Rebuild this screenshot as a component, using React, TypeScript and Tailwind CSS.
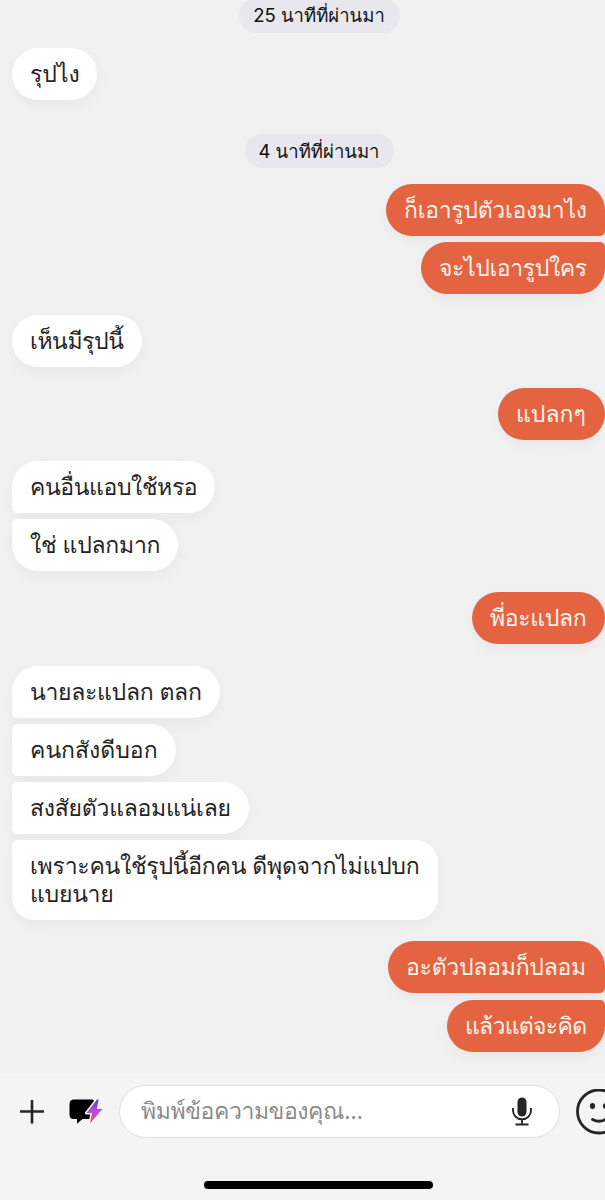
import { clsx } from 'clsx';

type Message = {
  lines: string[];
  // bubble width and text tracking
  size: string;
};

type Group = {
  mine?: boolean;
  className: string;
  messages: Message[];
};

const firstGroups: Group[] = [
  { className: 'mt-[15px]', messages: [{ lines: ['รุปไง'], size: 'w-[85px]' }] },
];

const groups: Group[] = [
  {
    mine: true,
    className: 'mt-[15.5px]',
    messages: [
      { lines: ['ก็เอารูปตัวเองมาไง'], size: 'w-[219px] tracking-[-0.3px]' },
      { lines: ['จะไปเอารูปใคร'], size: 'w-[184px] tracking-[-0.4px]' },
    ],
  },
  { className: 'mt-[21px]', messages: [{ lines: ['เห็นมีรุปนี้'], size: 'w-[130px] tracking-[-0.45px]' }] },
  { mine: true, className: 'mt-[21px]', messages: [{ lines: ['แปลกๆ'], size: 'w-[107px]' }] },
  {
    className: 'mt-[21px]',
    messages: [
      { lines: ['คนอื่นแอบใช้หรอ'], size: 'w-[203px] tracking-[-0.4px]' },
      { lines: ['ใช่ แปลกมาก'], size: 'w-[166px] tracking-[-0.25px]' },
    ],
  },
  { mine: true, className: 'mt-[21px]', messages: [{ lines: ['พี่อะแปลก'], size: 'w-[133px] tracking-[-0.35px]' }] },
  {
    className: 'mt-[21.5px]',
    messages: [
      { lines: ['นายละแปลก ตลก'], size: 'w-[208px] tracking-[-0.3px]' },
      { lines: ['คนกสังดีบอก'], size: 'w-[164px]' },
      { lines: ['สงสัยตัวแลอมแน่เลย'], size: 'w-[237px] tracking-[-0.25px]' },
      { lines: ['เพราะคนใช้รุปนี้อีกคน ดีพุดจากไม่แปบก', 'แบยนาย'], size: 'w-[426px] tracking-[-0.25px]' },
    ],
  },
  {
    mine: true,
    className: 'mt-[21px]',
    messages: [
      { lines: ['อะตัวปลอมก็ปลอม'], size: 'w-[217px] tracking-[-0.25px]' },
      { lines: ['แล้วแต่จะคิด'], size: 'w-[158px] tracking-[-0.7px]' },
    ],
  },
];

function TimePill({ children, className }: { children: string; className: string }) {
  return (
    <div
      className={clsx(
        'ml-[33px] flex shrink-0 items-center justify-center self-center whitespace-nowrap rounded-full bg-[#e8e7ed] pt-px text-[18.5px] text-[#111]',
        className,
      )}
    >
      {children}
    </div>
  );
}

function MessageGroup({ mine, className, messages }: Group) {
  return (
    <div className={clsx('flex shrink-0 flex-col gap-[6.3px]', mine ? 'items-end' : 'items-start pl-3', className)}>
      {messages.map(({ lines, size }, i) => {
        const joinsAbove = i > 0;
        const joinsBelow = i < messages.length - 1;
        return (
          <div
            key={lines[0]}
            className={clsx(
              'flex flex-col justify-center whitespace-nowrap px-[18px] text-[23px] leading-[28px] shadow-[0_6px_16px_rgba(0,0,0,0.04)]',
              lines.length > 1 ? 'h-[80px] rounded-[22px]' : 'h-[52px] rounded-[26px]',
              mine ? 'bg-[#e46441] text-[#fff3ea]' : 'bg-white text-[#252525]',
              joinsAbove && (mine ? 'rounded-tr-[5px]' : 'rounded-tl-[5px]'),
              joinsBelow && (mine ? 'rounded-br-[5px]' : 'rounded-bl-[5px]'),
              size,
            )}
          >
            {lines.map((line) => (
              <div key={line}>{line}</div>
            ))}
          </div>
        );
      })}
    </div>
  );
}

function QuickReplyIcon() {
  return (
    <svg width="34" height="26" viewBox="0 0 34 26" className="shrink-0">
      <defs>
        <linearGradient id="bolt" x1="0" y1="0" x2="0" y2="1">
          <stop offset="0" stopColor="#4b3fd0" />
          <stop offset="0.45" stopColor="#b646e4" />
          <stop offset="1" stopColor="#f2555a" />
        </linearGradient>
      </defs>
      <path d="M5 0.5H23Q25 0.5 25 2.5V20H13.5L8 24.7V20H5Q0.5 20 0.5 15.5V5Q0.5 0.5 5 0.5Z" fill="#000" />
      <path
        d="M28.3 0.3 17.5 14H23L21 24.5 33.4 10H27.8L29.6 0.7Z"
        fill="url(#bolt)"
        stroke="#f4f4f4"
        strokeWidth="3"
        strokeLinejoin="round"
        paintOrder="stroke"
      />
    </svg>
  );
}

function MicIcon() {
  return (
    <svg width="20" height="30" viewBox="0 0 20 30" fill="none" className="shrink-0">
      <rect x="5.5" y="0.5" width="9" height="19" rx="4.5" fill="#252525" />
      <path d="M1 11V13.5A9 8.8 0 0 0 19 13.5V11M10 22.5V27.5M3.5 27.5H16.5" stroke="#252525" strokeWidth="1.9" />
    </svg>
  );
}

function SmileIcon() {
  return (
    <svg width="46" height="46" viewBox="0 0 46 46" fill="none" className="shrink-0">
      <circle cx="23" cy="22.5" r="21.5" stroke="#252525" strokeWidth="2.8" />
      <ellipse cx="16.5" cy="17" rx="2.6" ry="3" fill="#252525" />
      <ellipse cx="29.5" cy="17" rx="2.6" ry="3" fill="#252525" />
      <path d="M16.5 30.5Q23 34 29.5 30.5" stroke="#252525" strokeWidth="2.8" strokeLinecap="round" />
    </svg>
  );
}

function Composer() {
  return (
    <footer className="flex h-[127px] shrink-0 flex-col bg-[#f4f4f4]">
      <div className="mt-3 flex h-[53px] items-center">
        <svg width="24" height="24" viewBox="0 0 24 24" className="ml-5 shrink-0">
          <path d="M12 0.8V22.5M1 11.5H23" stroke="#252525" strokeWidth="2.6" strokeLinecap="round" />
        </svg>
        <div className="ml-[25px] flex">
          <QuickReplyIcon />
        </div>
        <div className="ml-[16px] flex h-[53px] w-[441px] shrink-0 items-center justify-between rounded-full border-[1.5px] border-[#dedede] bg-white pl-[21px] pr-[27px]">
          <span className="whitespace-nowrap text-[23px] tracking-[-0.42px] text-[#8b8b8b]">พิมพ์ข้อความของคุณ...</span>
          <MicIcon />
        </div>
        <div className="ml-4 flex">
          <SmileIcon />
        </div>
      </div>
      <div className="ml-[204px] mt-[43px] h-[8px] w-[229px] rounded-full bg-black" />
    </footer>
  );
}

export default function App() {
  return (
    <div className="flex h-[1200px] w-[605px] flex-col overflow-hidden bg-[#f1f1f1] font-['Inter','Loma','Garuda','Waree','Noto_Sans_Thai_Looped','Noto_Sans_Thai','Noto_Sans',sans-serif]">
      <TimePill className="-mt-[2px] h-[35px] w-[161px]">25 นาทีที่ผ่านมา</TimePill>
      {firstGroups.map((group) => (
        <MessageGroup key={group.messages[0].lines[0]} {...group} />
      ))}
      <TimePill className="mt-[34px] h-[34px] w-[149px]">4 นาทีที่ผ่านมา</TimePill>
      {groups.map((group) => (
        <MessageGroup key={group.messages[0].lines[0]} {...group} />
      ))}
      <div className="flex-1" />
      <Composer />
    </div>
  );
}
